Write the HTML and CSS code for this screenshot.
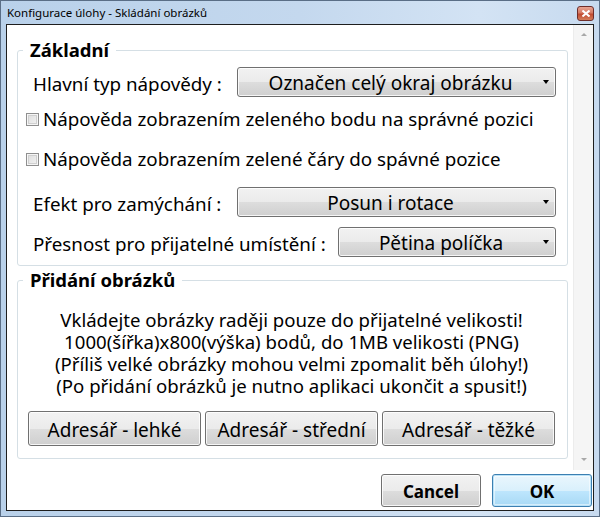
FILE: index.html
```html
<!DOCTYPE html>
<html lang="cs">
<head>
<meta charset="utf-8">
<title>Konfigurace úlohy - Skládání obrázků</title>
<link rel="stylesheet" href="styles.css">
</head>
<body>
<div class="window">
  <div class="titlebar">
    <span class="title">Konfigurace úlohy - Skládání obrázků</span>
    <span class="close">
      <svg width="8" height="7" viewBox="0 0 8 7"><path d="M0.5 0.5 L7.5 6.5 M7.5 0.5 L0.5 6.5" stroke="#fff" stroke-width="2" fill="none"/></svg>
    </span>
  </div>
  <div class="client">
    <div class="scroller">
      <div class="scroll-content">
        <fieldset class="group basic">
          <legend>Základní</legend>
          <div class="row row-hint">
            <span class="label">Hlavní typ nápovědy :</span>
            <div class="combo combo-wide">Označen celý okraj obrázku<span class="caret"></span></div>
          </div>
          <label class="check check-point"><span class="box"></span>Nápověda zobrazením zeleného bodu na správné pozici</label>
          <label class="check check-line"><span class="box"></span>Nápověda zobrazením zelené čáry do spávné pozice</label>
          <div class="row row-effect">
            <span class="label">Efekt pro zamýchání :</span>
            <div class="combo combo-wide">Posun i rotace<span class="caret"></span></div>
          </div>
          <div class="row row-precision">
            <span class="label">Přesnost pro přijatelné umístění :</span>
            <div class="combo combo-narrow">Pětina políčka<span class="caret"></span></div>
          </div>
        </fieldset>
        <fieldset class="group images">
          <legend>Přidání obrázků</legend>
          <div class="notes">
            <p>Vkládejte obrázky raději pouze do přijatelné velikosti!</p>
            <p>1000(šířka)x800(výška) bodů, do 1MB velikosti (PNG)</p>
            <p>(Příliš velké obrázky mohou velmi zpomalit běh úlohy!)</p>
            <p>(Po přidání obrázků je nutno aplikaci ukončit a spusit!)</p>
          </div>
          <div class="folders">
            <button class="btn folder">Adresář - lehké</button>
            <button class="btn folder">Adresář - střední</button>
            <button class="btn folder">Adresář - těžké</button>
          </div>
        </fieldset>
      </div>
      <div class="vscroll">
        <span class="arrow arrow-up"></span>
        <span class="arrow arrow-down"></span>
      </div>
    </div>
    <div class="actions">
      <button class="btn action">Cancel</button>
      <button class="btn action default">OK</button>
    </div>
  </div>
</div>
</body>
</html>
```
FILE: styles.css
```css
* { box-sizing: border-box; }

html, body {
  margin: 0;
  padding: 0;
  width: 600px;
  height: 517px;
  overflow: hidden;
  background: #fff;
}

body {
  font-family: "Noto Sans", "Open Sans", sans-serif;
  color: #000;
}

/* window frame */
.window {
  width: 600px;
  height: 517px;
  border: 1px solid #5a6e86;
  background: linear-gradient(90deg, #b9d1ea 0%, #c4d8ee 50%, #d3e3f4 80%, #c7daef 100%);
  padding: 0 5px 5px;
  display: flex;
  flex-direction: column;
}

.titlebar {
  height: 23px;
  display: flex;
  align-items: center;
  justify-content: space-between;
  padding-left: 1px;
}

.title {
  font-size: 11.5px;
  color: #000;
  margin-top: -1px;
}

.close {
  width: 17px;
  height: 15px;
  margin-top: 1px;
  border: 1px solid #6e2d2a;
  border-radius: 3px;
  background: linear-gradient(#e8a493 0%, #d47963 45%, #c04a30 55%, #d47f5c 100%);
  display: flex;
  align-items: center;
  justify-content: center;
}

.client {
  flex: 1;
  border: 1px solid #1e1e1e;
  background: #fff;
  display: flex;
  flex-direction: column;
}

.scroller {
  height: 445px;
  display: flex;
}

.scroll-content {
  flex: 1;
  padding: 13px 5px 0 10px;
}

.vscroll {
  width: 20px;
  background: #f5f5f5;
  border-left: 1px solid #ececec;
  position: relative;
}

.arrow {
  position: absolute;
  left: 7px;
  width: 0;
  height: 0;
  border-left: 3px solid transparent;
  border-right: 3px solid transparent;
}

.arrow-up {
  top: 8px;
  border-bottom: 3px solid #a8a8a8;
}

.arrow-down {
  bottom: 9px;
  border-top: 3px solid #a8a8a8;
}

/* group boxes */
.group {
  margin: 0;
  border: 1px solid #d5dfe5;
  border-radius: 3px;
  min-width: 0;
}

.group legend {
  font-weight: bold;
  font-size: 18.5px;
  line-height: 24px;
  height: 24px;
  padding: 0 7px;
}

.basic {
  padding: 0 11px 8px 15px;
}

.basic legend { margin-left: -10px; }

.images {
  margin-top: 2px;
  padding: 0 12px 12px 10px;
}

.images legend { margin-left: -5px; }

.label {
  font-size: 18.8px;
  white-space: nowrap;
  padding-top: 3px;
}

.row {
  display: flex;
  align-items: center;
  height: 30px;
}

.row-hint { margin-top: 5px; }
.row-effect { margin-top: 16px; }
.row-precision { margin-top: 10px; }

.combo {
  margin-left: auto;
  height: 30px;
  border: 1px solid #707070;
  border-radius: 3px;
  background: linear-gradient(#f2f2f2 0%, #ebebeb 50%, #dddddd 51%, #cfcfcf 100%);
  box-shadow: inset 0 0 0 1px rgba(255, 255, 255, 0.8);
  font-size: 19px;
  display: flex;
  align-items: center;
  justify-content: center;
  position: relative;
  padding: 2px 12px 0 0;
}

.combo-wide { width: 319px; }
.combo-narrow { width: 218px; }

.caret {
  position: absolute;
  right: 6px;
  top: 12px;
  width: 0;
  height: 0;
  border-left: 3.5px solid transparent;
  border-right: 3.5px solid transparent;
  border-top: 4px solid #000;
}

.check {
  display: flex;
  align-items: center;
  height: 24px;
  font-size: 18.8px;
  margin-left: -7px;
  white-space: nowrap;
}

.check-point { margin-top: 10px; }
.check-line { margin-top: 16px; }

.box {
  width: 13px;
  height: 13px;
  border: 1px solid #8f8f8f;
  background: linear-gradient(135deg, #dcdcdc 0%, #f4f4f4 100%);
  box-shadow: inset 0 0 0 1px #f6f6f6, inset 0 0 0 2px #d0d0d0;
  margin-right: 4px;
  flex: none;
}

/* notes */
.notes {
  margin-top: 17px;
  text-align: center;
  font-size: 18.6px;
  line-height: 22px;
}

.notes p {
  margin: 0;
}

.folders {
  margin-top: 14px;
  display: flex;
  gap: 4px;
}

.btn {
  font-family: inherit;
  color: #000;
  border: 1px solid #707070;
  border-radius: 3px;
  background: linear-gradient(#f2f2f2 0%, #ebebeb 50%, #dddddd 51%, #cfcfcf 100%);
  box-shadow: inset 0 0 0 1px rgba(255, 255, 255, 0.8);
  padding: 0;
  cursor: default;
}

.folder {
  width: 173px;
  height: 35px;
  font-size: 19px;
  padding-top: 2px;
}

.actions {
  flex: 1;
  display: flex;
  justify-content: flex-end;
  align-items: flex-start;
  padding: 4px 1px 0 0;
  gap: 11px;
}

.action {
  width: 100px;
  height: 33px;
  font-size: 17px;
  font-weight: bold;
  padding-top: 2px;
}

.default {
  border-color: #3c7fb1;
  background: linear-gradient(#eaf6fd 0%, #d9f0fc 50%, #bee6fd 51%, #a7d9f5 100%);
  box-shadow: inset 0 0 0 1px #b9e2f8, inset 0 0 0 2px rgba(255, 255, 255, 0.5);
}
```
